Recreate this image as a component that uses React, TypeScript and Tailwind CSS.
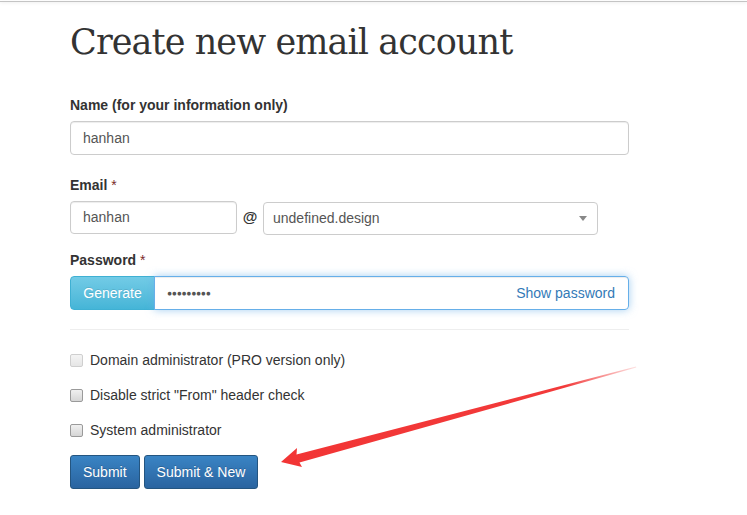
import React from "react";

function Check({ label, disabled }: { label: string; disabled?: boolean }) {
  return (
    <div className="flex items-center h-[20px] leading-[20px]">
      <span
        className={
          "inline-block w-[13px] h-[13px] rounded-[2px] border " +
          (disabled
            ? "border-[#cfcfcf] bg-gradient-to-b from-[#f4f4f4] to-[#e6e6e6]"
            : "border-[#9a9a9a] bg-gradient-to-b from-[#f0f0f0] to-[#d6d6d6]")
        }
      />
      <span className="ml-[7px] text-[14px] text-[#333]">{label}</span>
    </div>
  );
}

export default function App() {
  return (
    <div
      className="relative w-[747px] h-[515px] bg-white overflow-hidden"
      style={{ fontFamily: '"Liberation Sans", Arial, sans-serif' }}
    >
      <div className="h-px bg-white" />
      <div className="h-px bg-[#c4c4c4] shadow-[0_1px_3px_rgba(0,0,0,0.12)]" />

      <div className="pl-[70px] w-[629px]">
        <h1
          className="mt-[20px] h-[40px] leading-[40px] text-[35px] tracking-[-0.9px] text-[#333] whitespace-nowrap"
          style={{ fontFamily: '"DejaVu Serif", "Liberation Serif", serif' }}
        >
          Create new email account
        </h1>

        <div className="mt-[33px] h-[20px] leading-[20px] text-[14px] font-bold text-[#333]">
          Name (for your information only)
        </div>
        <div className="mt-[6px] h-[34px] border border-[#ccc] rounded-[4px] flex items-center px-[12px] text-[14px] text-[#555] shadow-[inset_0_1px_1px_rgba(0,0,0,0.075)]">
          hanhan
        </div>

        <div className="mt-[20px] h-[20px] leading-[20px] text-[14px] font-bold text-[#333]">
          Email <span className="font-normal text-[#7a2a2a]">*</span>
        </div>
        <div className="mt-[6px] flex items-start h-[34px]">
          <div className="w-[167px] h-[33px] border border-[#ccc] rounded-[4px] flex items-center px-[12px] text-[14px] text-[#555] shadow-[inset_0_1px_1px_rgba(0,0,0,0.075)]">
            hanhan
          </div>
          <div className="w-[26px] h-[33px] flex items-center justify-center text-[15px] font-bold text-[#333]">
            @
          </div>
          <div className="mt-px w-[335px] h-[33px] border border-[#ccc] rounded-[4px] flex items-center justify-between pl-[9px] pr-[10px] text-[14px] text-[#555]">
            <span>undefined.design</span>
            <svg width="8" height="5" viewBox="0 0 8 5">
              <path d="M0 0 L8 0 L4 5 Z" fill="#888" />
            </svg>
          </div>
        </div>

        <div className="mt-[15px] h-[20px] leading-[20px] text-[14px] font-bold text-[#333]">
          Password <span className="font-normal text-[#7a2a2a]">*</span>
        </div>
        <div className="mt-[6px] flex h-[34px]">
          <div
            className="w-[85px] h-[34px] flex items-center justify-center text-[14px] text-white rounded-l-[4px] border border-[#3fb0d3] bg-gradient-to-b from-[#72cbe6] to-[#45b5d7]"
            style={{ textShadow: "0 -1px 0 rgba(0,0,0,0.1)" }}
          >
            Generate
          </div>
          <div className="flex-1 h-[34px] -ml-px border border-[#66afe9] rounded-r-[4px] flex items-center justify-between pl-[12px] pr-[13px] text-[14px] shadow-[inset_0_1px_1px_rgba(0,0,0,0.075),0_0_8px_rgba(102,175,233,0.6)]">
            <span className="text-[#555] text-[8.5px] tracking-[-0.3px]">●●●●●●●●●</span>
            <span className="text-[#337ab7]">Show password</span>
          </div>
        </div>

        <div className="mt-[19px] h-px bg-[#eee]" />

        <div className="mt-[20px] flex flex-col gap-[15px]">
          <Check label="Domain administrator (PRO version only)" disabled />
          <Check label={'Disable strict "From" header check'} />
          <Check label="System administrator" />
        </div>

        <div className="mt-[15px] flex gap-[4px]">
          <div
            className="h-[34px] px-[12px] flex items-center text-[14px] text-white rounded-[3px] border border-[#245580] bg-gradient-to-b from-[#3a84c4] to-[#2a64a0]"
            style={{ textShadow: "0 -1px 0 rgba(0,0,0,0.2)" }}
          >
            Submit
          </div>
          <div
            className="h-[34px] px-[12px] flex items-center text-[14px] text-white rounded-[3px] border border-[#245580] bg-gradient-to-b from-[#3a84c4] to-[#2a64a0]"
            style={{ textShadow: "0 -1px 0 rgba(0,0,0,0.2)" }}
          >
            Submit &amp; New
          </div>
        </div>
      </div>

      <svg
        className="absolute left-0 top-0 pointer-events-none"
        width="747"
        height="515"
        viewBox="0 0 747 515"
      >
        <defs>
          <linearGradient id="ag" x1="281" y1="462" x2="636" y2="367" gradientUnits="userSpaceOnUse">
            <stop offset="0" stopColor="#f23535" />
            <stop offset="0.8" stopColor="#f23a3a" />
            <stop offset="1" stopColor="#f23a3a" stopOpacity="0.15" />
          </linearGradient>
        </defs>
        <polygon
          points="281,462 297,448 296.5,454.5 636,366.5 636.3,367.6 299.5,462.5 302,467"
          fill="url(#ag)"
        />
      </svg>
    </div>
  );
}
